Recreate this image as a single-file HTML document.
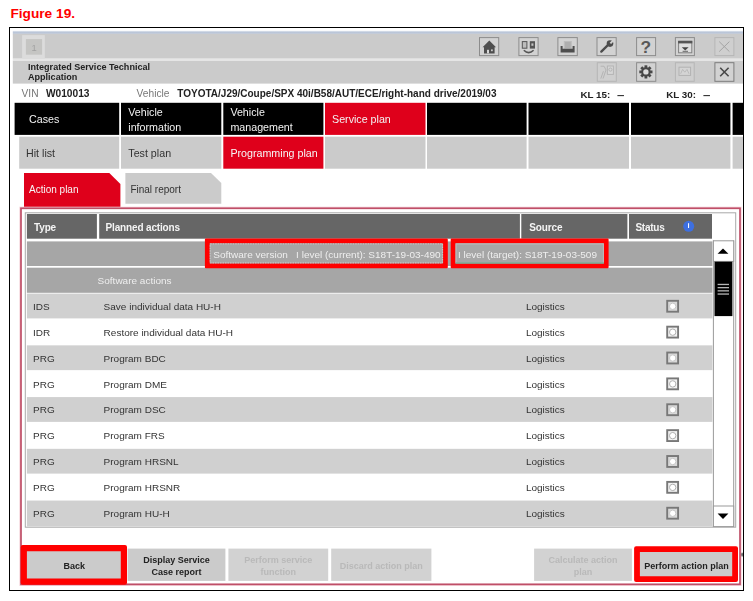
<!DOCTYPE html>
<html lang="en">
<head>
<meta charset="utf-8">
<title>Figure 19</title>
<style>
html,body{margin:0;padding:0;background:#fff;}
body{width:753px;height:601px;position:relative;overflow:hidden;font-family:"Liberation Sans",Arial,sans-serif;color:#333;}
svg{position:absolute;left:0;top:0;}
#txt{position:absolute;left:0;top:0;width:753px;height:601px;will-change:transform;}
.t{position:absolute;white-space:nowrap;line-height:1;}
#fig{position:absolute;left:10.4px;top:6.9px;font-size:13.7px;line-height:1;font-weight:bold;color:#ff0000;white-space:nowrap;}
.navt{color:#f2f2f2;font-size:10.7px;}
.subt{color:#333;font-size:10.7px;}
.rt{font-size:10px;color:#333;transform:scaleY(.95);transform-origin:0 55%;}
.bt{position:absolute;font-size:9px;font-weight:bold;color:#222;text-align:center;line-height:12px;white-space:nowrap;}
.bt.dis{color:#b9b9b9;}
</style>
</head>
<body>
<div id="fig">Figure 19.</div>
<svg width="753" height="601" viewBox="0 0 753 601">
<rect x="9.5" y="27.5" width="734" height="563" fill="#fff" stroke="#000" stroke-width="1"/>
<defs><linearGradient id="tg" x1="0" y1="0" x2="0" y2="1"><stop offset="0" stop-color="#e4e9f1"/><stop offset=".45" stop-color="#b9c5d8"/><stop offset="1" stop-color="#c9ced8"/></linearGradient></defs>
<rect x="12.8" y="30.8" width="730.2" height="3.4" fill="url(#tg)"/>
<rect x="12.8" y="34" width="730.2" height="24.7" fill="#cbcbcb"/>
<rect x="12.8" y="58.7" width="730.2" height="2.1" fill="#e6e6e6"/>
<rect x="12.8" y="60.8" width="730.2" height="22.8" fill="#cbcbcb"/>
<rect x="22.1" y="35.1" width="22.7" height="23.6" fill="#dcdcdc"/>
<rect x="25.9" y="39.1" width="16.2" height="15.6" fill="#c5c5c3"/>
<rect x="14.6" y="102.8" width="104.6" height="32.1" fill="#000"/>
<rect x="19.2" y="136.7" width="100" height="32" fill="#cbcbcb"/>
<rect x="121" y="102.8" width="100.3" height="32.1" fill="#000"/>
<rect x="121" y="136.7" width="100.3" height="32" fill="#cbcbcb"/>
<rect x="223.3" y="102.8" width="100.1" height="32.1" fill="#000"/>
<rect x="223.3" y="136.7" width="100.1" height="32" fill="#df001b"/>
<rect x="325" y="102.8" width="100.5" height="32.1" fill="#df001b"/>
<rect x="325" y="136.7" width="100.5" height="32" fill="#cbcbcb"/>
<rect x="427" y="102.8" width="99.6" height="32.1" fill="#000"/>
<rect x="427" y="136.7" width="99.6" height="32" fill="#cbcbcb"/>
<rect x="528.5" y="102.8" width="100.5" height="32.1" fill="#000"/>
<rect x="528.5" y="136.7" width="100.5" height="32" fill="#cbcbcb"/>
<rect x="631" y="102.8" width="99.4" height="32.1" fill="#000"/>
<rect x="631" y="136.7" width="99.4" height="32" fill="#cbcbcb"/>
<rect x="732.6" y="102.8" width="10.4" height="32.1" fill="#000"/>
<rect x="732.6" y="136.7" width="10.4" height="32" fill="#cbcbcb"/>
<polygon points="24,173 109.3,173 120.4,184 120.4,208 24,208" fill="#df001b"/>
<polygon points="125.4,173 211,173 221.3,183 221.3,203.7 125.4,203.7" fill="#cbcbcb"/>
<rect x="21" y="208.3" width="719" height="376" fill="#fff" stroke="#f3cfd6" stroke-width="3.2"/>
<rect x="21" y="208.3" width="719" height="376" fill="#fff" stroke="#bf4f68" stroke-width="1.7"/>
<rect x="25.3" y="212.8" width="710.4" height="314.4" fill="#fff" stroke="#a9a9a9" stroke-width="1"/>
<rect x="26.9" y="214" width="70" height="24.7" fill="#666"/>
<rect x="99.2" y="214" width="420.7" height="24.7" fill="#666"/>
<rect x="521.3" y="214" width="106.1" height="24.7" fill="#666"/>
<rect x="629" y="214" width="83" height="24.7" fill="#666"/>
<circle cx="688.7" cy="226.3" r="5.5" fill="#3d6fe0"/>
<rect x="26.9" y="241.4" width="685.5" height="24.6" fill="#a6a6a6"/>
<rect x="26.9" y="267.7" width="685.5" height="25.1" fill="#a6a6a6"/>
<rect x="26.9" y="293.6" width="685.5" height="24.8" fill="#d0d0d0"/>
<rect x="667.2" y="300.80" width="10.9" height="10.9" fill="#d9d9d9" stroke="#787878" stroke-width="1.9"/>
<circle cx="672.7" cy="306.30" r="3.2" fill="#fff" stroke="#c6c6c6" stroke-width="1"/>
<rect x="667.2" y="326.67" width="10.9" height="10.9" fill="#f2f2f2" stroke="#787878" stroke-width="1.9"/>
<circle cx="672.7" cy="332.17" r="3.2" fill="#fff" stroke="#b0b0b0" stroke-width="1"/>
<rect x="26.9" y="345.34" width="685.5" height="24.8" fill="#d0d0d0"/>
<rect x="667.2" y="352.54" width="10.9" height="10.9" fill="#d9d9d9" stroke="#787878" stroke-width="1.9"/>
<circle cx="672.7" cy="358.04" r="3.2" fill="#fff" stroke="#c6c6c6" stroke-width="1"/>
<rect x="667.2" y="378.41" width="10.9" height="10.9" fill="#f2f2f2" stroke="#787878" stroke-width="1.9"/>
<circle cx="672.7" cy="383.91" r="3.2" fill="#fff" stroke="#b0b0b0" stroke-width="1"/>
<rect x="26.9" y="397.08" width="685.5" height="24.8" fill="#d0d0d0"/>
<rect x="667.2" y="404.28" width="10.9" height="10.9" fill="#d9d9d9" stroke="#787878" stroke-width="1.9"/>
<circle cx="672.7" cy="409.78" r="3.2" fill="#fff" stroke="#c6c6c6" stroke-width="1"/>
<rect x="667.2" y="430.15" width="10.9" height="10.9" fill="#f2f2f2" stroke="#787878" stroke-width="1.9"/>
<circle cx="672.7" cy="435.65" r="3.2" fill="#fff" stroke="#b0b0b0" stroke-width="1"/>
<rect x="26.9" y="448.82" width="685.5" height="24.8" fill="#d0d0d0"/>
<rect x="667.2" y="456.02" width="10.9" height="10.9" fill="#d9d9d9" stroke="#787878" stroke-width="1.9"/>
<circle cx="672.7" cy="461.52" r="3.2" fill="#fff" stroke="#c6c6c6" stroke-width="1"/>
<rect x="667.2" y="481.89" width="10.9" height="10.9" fill="#f2f2f2" stroke="#787878" stroke-width="1.9"/>
<circle cx="672.7" cy="487.39" r="3.2" fill="#fff" stroke="#b0b0b0" stroke-width="1"/>
<rect x="26.9" y="500.56" width="685.5" height="25.94" fill="#d0d0d0"/>
<rect x="667.2" y="507.76" width="10.9" height="10.9" fill="#d9d9d9" stroke="#787878" stroke-width="1.9"/>
<circle cx="672.7" cy="513.26" r="3.2" fill="#fff" stroke="#c6c6c6" stroke-width="1"/>
<path d="M713.4 240.4V527M733.7 240.4V527" stroke="#9a9a9a" stroke-width="1" fill="none"/>
<rect x="713.4" y="240.8" width="20.3" height="20.6" fill="#fff" stroke="#9a9a9a" stroke-width="1"/>
<rect x="713.4" y="506" width="20.3" height="20.6" fill="#fff" stroke="#9a9a9a" stroke-width="1"/>
<rect x="714.5" y="261.7" width="17.9" height="54.4" fill="#000"/>
<rect x="717.6" y="283.8" width="11.4" height="1.3" fill="#b5b5b5"/>
<rect x="717.6" y="287" width="11.4" height="1.3" fill="#b5b5b5"/>
<rect x="717.6" y="290.2" width="11.4" height="1.3" fill="#b5b5b5"/>
<rect x="717.6" y="293.4" width="11.4" height="1.3" fill="#b5b5b5"/>
<polygon points="723,248.4 717.6,253.7 728.4,253.7" fill="#000"/>
<polygon points="717.6,513.6 728.4,513.6 723,519" fill="#000"/>
<rect x="24" y="548.6" width="100.5" height="32.3" fill="#cbcbcb"/>
<rect x="127.6" y="548.6" width="97.8" height="32.3" fill="#cbcbcb"/>
<rect x="228.4" y="548.6" width="99.8" height="32.3" fill="#d2d2d2"/>
<rect x="331.2" y="548.6" width="100.2" height="32.3" fill="#d2d2d2"/>
<rect x="534.1" y="548.6" width="97.8" height="32.3" fill="#d2d2d2"/>
<rect x="635" y="548.6" width="101" height="32.3" fill="#cbcbcb"/>
<path fill-rule="evenodd" fill="#ff0000" d="M205.9 238.5H446.8Q447.8 238.5 447.8 239.5V267.3Q447.8 268.3 446.8 268.3H205.9Q204.9 268.3 204.9 267.3V239.5Q204.9 238.5 205.9 238.5ZM209.7 243.3V263.5H443V243.3Z"/>
<rect x="210.2" y="243.9" width="232.4" height="19" fill="none" stroke="#c9c9c9" stroke-width="1" stroke-dasharray="1.5 1"/>
<path fill-rule="evenodd" fill="#ff0000" d="M451.7 238.5H607.6Q608.6 238.5 608.6 239.5V267.3Q608.6 268.3 607.6 268.3H451.7Q450.7 268.3 450.7 267.3V239.5Q450.7 238.5 451.7 238.5ZM455.5 243.3V263.5H603.8V243.3Z"/>
<rect x="456" y="243.9" width="147.4" height="19" fill="none" stroke="#bdbdbd" stroke-width="1"/>
<path d="M455.6 263H603.8" stroke="#5fa080" stroke-width="1"/>
<path fill-rule="evenodd" fill="#ff0000" d="M22.7 545H125Q127 545 127 547V582.7Q127 584.7 125 584.7H22.7Q20.7 584.7 20.7 582.7V547Q20.7 545 22.7 545ZM26.9 551.2V578.5H120.8V551.2Z"/>
<path fill-rule="evenodd" fill="#ff0000" d="M636.1 546.3H736Q738 546.3 738 548.3V580.1Q738 582.1 736 582.1H636.1Q634.1 582.1 634.1 580.1V548.3Q634.1 546.3 636.1 546.3ZM639.9 552.1V576.3H732.2V552.1Z"/>
<ellipse cx="742.1" cy="554.6" rx="0.9" ry="2.2" fill="#666"/>
</svg>
<svg style="left:470px;top:33px;" width="273" height="52" viewBox="470 33 273 52">
<g fill="#d2d2d2" stroke="#8c8c8c" stroke-width="1">
<rect x="479.5" y="37.6" width="19.2" height="18"/>
<rect x="518.9" y="37.6" width="19.2" height="18"/>
<rect x="557.9" y="37.6" width="19.4" height="18"/>
<rect x="597" y="37.6" width="19.2" height="18"/>
<rect x="636.6" y="37.6" width="19" height="18"/>
<rect x="675.4" y="37.6" width="19" height="18"/>
<rect x="636.6" y="62.7" width="19.2" height="18.6"/>
<rect x="714.9" y="62.7" width="19" height="18.6" stroke="#7c7c7c"/>
</g>
<g fill="#cfcfcf" stroke="#b6b6b6" stroke-width="1">
<rect x="714.9" y="37.6" width="19" height="18"/>
<rect x="597.3" y="62.7" width="19" height="18.6"/>
<rect x="675.4" y="62.7" width="18.8" height="18.6"/>
</g>
<!-- home -->
<path d="M489.3 40.4 L496 47.2 L494.6 47.2 L494.6 53.4 L484 53.4 L484 47.2 L482.6 47.2 Z" fill="#4e4e4e"/>
<rect x="487" y="49.8" width="2" height="3.6" fill="#d8d8d8"/>
<rect x="491" y="49.4" width="1.8" height="1.8" fill="#c8c8c8"/>
<!-- devices -->
<rect x="522.3" y="41.6" width="4.6" height="6.6" fill="#bdbdbd" stroke="#555" stroke-width="1"/>
<rect x="529.8" y="41.2" width="5.2" height="7.4" fill="#555"/>
<rect x="531.4" y="43.4" width="2" height="2.4" fill="#c4c4c4"/>
<path d="M523.8 50.2 Q528.6 55 533.6 50.2" fill="none" stroke="#555" stroke-width="1.5"/>
<!-- inbox -->
<rect x="563.8" y="41" width="8" height="8" fill="#bcbcbc"/>
<path d="M565 43h5.6M565 45h5.6M565 47h5.6" stroke="#9a9a9a" stroke-width="0.8"/>
<path d="M560.6 46 L562.6 46 L562.6 48.8 L572.6 48.8 L572.6 46 L574.6 46 L574.6 52.4 L560.6 52.4 Z" fill="#4e4e4e"/>
<!-- wrench -->
<path d="M601.3 51.6 L608.4 44.6" stroke="#4c4c4c" stroke-width="2.3" stroke-linecap="round" fill="none"/>
<circle cx="610" cy="43.6" r="3.3" fill="#4c4c4c"/>
<rect x="609.1" y="38.6" width="2" height="4.6" fill="#d2d2d2" transform="rotate(45 610 43.6)"/>
<!-- question -->
<text x="645.9" y="53" font-family="Liberation Sans, Arial, sans-serif" font-size="17.4" font-weight="bold" fill="#585858" text-anchor="middle">?</text>
<!-- dropdown window -->
<rect x="678.6" y="41.4" width="13.2" height="11.4" fill="#dedede" stroke="#808080" stroke-width="1"/>
<rect x="678.1" y="40.8" width="14.2" height="2.6" fill="#555"/>
<path d="M681.8 47.2 L688.6 47.2 L685.2 50.6 Z" fill="#444"/>
<rect x="682.6" y="50.8" width="5.4" height="1" fill="#666"/>
<!-- disabled X -->
<path d="M719.2 41.6 L729.4 51.6 M729.4 41.6 L719.2 51.6" stroke="#a4a4a4" stroke-width="1" fill="none"/>
<!-- disabled clipboard -->
<g stroke="#b4b4b4" stroke-width="1" fill="none">
<path d="M600.6 66.2 L604 66.2 L606 70 L603 78.6 M603.4 71.2 L600.8 78.6"/>
<rect x="607.4" y="66" width="6" height="8.4" fill="#d6d6d6"/>
<circle cx="610.4" cy="69.6" r="1.6"/>
</g>
<!-- gear -->
<g transform="translate(645.9 71.9)" fill="#484848">
<circle r="4.7"/>
<g id="gt"><rect x="-1.4" y="-6.6" width="2.8" height="13.2"/></g>
<rect x="-1.4" y="-6.6" width="2.8" height="13.2" transform="rotate(45)"/>
<rect x="-1.4" y="-6.6" width="2.8" height="13.2" transform="rotate(90)"/>
<rect x="-1.4" y="-6.6" width="2.8" height="13.2" transform="rotate(135)"/>
<circle r="2.7" fill="#dcdcdc"/>
</g>
<!-- disabled mail -->
<rect x="679" y="67.2" width="11.6" height="8.2" fill="#d4d4d4" stroke="#b2b2b2" stroke-width="1"/>
<path d="M680.6 73.8 L682.6 69.4 L684.8 72.2 L687 69.4 L689 73.8" fill="none" stroke="#b8b8b8" stroke-width="0.9"/>
<!-- X -->
<path d="M720.2 67.8 L728.6 76.2 M728.6 67.8 L720.2 76.2" stroke="#484848" stroke-width="1.6" fill="none"/>
</svg>

<div id="txt">
<div class="t" style="left:31.6px;top:43.2px;font-size:9.4px;color:#a2a2a2;">1</div>
<div class="t" style="left:28px;top:62px;font-size:9.05px;font-weight:bold;color:#222;line-height:10.3px;white-space:pre;">Integrated Service Technical
Application</div>
<div class="t" style="left:21.5px;top:89.3px;font-size:10.2px;color:#777;">VIN</div>
<div class="t" style="left:45.9px;top:89.3px;font-size:10.2px;font-weight:bold;color:#222;">W010013</div>
<div class="t" style="left:136.6px;top:89.3px;font-size:10.2px;color:#777;">Vehicle</div>
<div class="t" style="left:177.3px;top:89.3px;font-size:10px;font-weight:bold;color:#222;">TOYOTA/J29/Coupe/SPX 40i/B58/AUT/ECE/right-hand drive/2019/03</div>
<div class="t" style="left:580.4px;top:89.5px;font-size:9.8px;font-weight:bold;color:#222;">KL 15:</div>
<div class="t" style="left:617px;top:90.7px;font-size:10.2px;font-weight:bold;color:#333;transform:scaleX(1.3);transform-origin:0 50%;">–</div>
<div class="t" style="left:666.2px;top:89.5px;font-size:9.8px;font-weight:bold;color:#222;">KL 30:</div>
<div class="t" style="left:702.8px;top:90.7px;font-size:10.2px;font-weight:bold;color:#333;transform:scaleX(1.3);transform-origin:0 50%;">–</div>
<div class="t navt" style="left:29px;top:113.6px;">Cases</div>
<div class="t navt" style="left:128.3px;top:105.4px;line-height:14.6px;white-space:pre;">Vehicle
information</div>
<div class="t navt" style="left:230.4px;top:105.4px;line-height:14.6px;white-space:pre;">Vehicle
management</div>
<div class="t navt" style="left:332px;top:113.6px;">Service plan</div>
<div class="t subt" style="left:26px;top:148px;">Hit list</div>
<div class="t subt" style="left:128.3px;top:148px;">Test plan</div>
<div class="t subt" style="left:230.4px;top:148px;color:#f6f6f6;">Programming plan</div>
<div class="t" style="left:29px;top:185.1px;font-size:10px;color:#f6f6f6;">Action plan</div>
<div class="t" style="left:130.4px;top:185.1px;font-size:10px;color:#333;">Final report</div>
<div class="t" style="left:34px;top:222.8px;font-size:10px;font-weight:bold;color:#f4f4f4;letter-spacing:-0.15px;">Type</div>
<div class="t" style="left:105.5px;top:222.8px;font-size:10px;font-weight:bold;color:#f4f4f4;letter-spacing:-0.15px;">Planned actions</div>
<div class="t" style="left:529.3px;top:222.8px;font-size:10px;font-weight:bold;color:#f4f4f4;letter-spacing:-0.15px;">Source</div>
<div class="t" style="left:635.4px;top:222.8px;font-size:10px;font-weight:bold;color:#f4f4f4;letter-spacing:-0.15px;letter-spacing:-0.25px;">Status</div>
<div class="t" style="left:687.5px;top:222.4px;font-size:7.5px;font-weight:bold;color:#fff;">i</div>
<div class="t rt" style="left:213.3px;top:250.2px;color:#eee;white-space:pre;">Software version   I level (current): S18T-19-03-490</div>
<div class="t rt" style="left:458px;top:250.2px;color:#eee;">I level (target): S18T-19-03-509</div>
<div class="t rt" style="left:97.6px;top:276.2px;color:#eee;">Software actions</div>
<div class="t rt" style="left:33px;top:301.9px;">IDS</div>
<div class="t rt" style="left:103.6px;top:301.9px;">Save individual data HU-H</div>
<div class="t rt" style="left:525.9px;top:301.9px;">Logistics</div>
<div class="t rt" style="left:33px;top:327.77px;">IDR</div>
<div class="t rt" style="left:103.6px;top:327.77px;">Restore individual data HU-H</div>
<div class="t rt" style="left:525.9px;top:327.77px;">Logistics</div>
<div class="t rt" style="left:33px;top:353.64px;">PRG</div>
<div class="t rt" style="left:103.6px;top:353.64px;">Program BDC</div>
<div class="t rt" style="left:525.9px;top:353.64px;">Logistics</div>
<div class="t rt" style="left:33px;top:379.51px;">PRG</div>
<div class="t rt" style="left:103.6px;top:379.51px;">Program DME</div>
<div class="t rt" style="left:525.9px;top:379.51px;">Logistics</div>
<div class="t rt" style="left:33px;top:405.38px;">PRG</div>
<div class="t rt" style="left:103.6px;top:405.38px;">Program DSC</div>
<div class="t rt" style="left:525.9px;top:405.38px;">Logistics</div>
<div class="t rt" style="left:33px;top:431.25px;">PRG</div>
<div class="t rt" style="left:103.6px;top:431.25px;">Program FRS</div>
<div class="t rt" style="left:525.9px;top:431.25px;">Logistics</div>
<div class="t rt" style="left:33px;top:457.12px;">PRG</div>
<div class="t rt" style="left:103.6px;top:457.12px;">Program HRSNL</div>
<div class="t rt" style="left:525.9px;top:457.12px;">Logistics</div>
<div class="t rt" style="left:33px;top:482.99px;">PRG</div>
<div class="t rt" style="left:103.6px;top:482.99px;">Program HRSNR</div>
<div class="t rt" style="left:525.9px;top:482.99px;">Logistics</div>
<div class="t rt" style="left:33px;top:508.86px;">PRG</div>
<div class="t rt" style="left:103.6px;top:508.86px;">Program HU-H</div>
<div class="t rt" style="left:525.9px;top:508.86px;">Logistics</div>
<div class="bt" style="left:24px;width:100.5px;top:559.8px;">Back</div>
<div class="bt" style="left:127.6px;width:97.8px;top:553.7px;">Display Service<br>Case report</div>
<div class="bt dis" style="left:228.4px;width:99.8px;top:553.7px;">Perform service<br>function</div>
<div class="bt dis" style="left:331.2px;width:100.2px;top:559.6px;">Discard action plan</div>
<div class="bt dis" style="left:534.1px;width:97.8px;top:553.7px;">Calculate action<br>plan</div>
<div class="bt" style="left:636.5px;width:100px;top:559.6px;">Perform action plan</div>
</div>
</body>
</html>
